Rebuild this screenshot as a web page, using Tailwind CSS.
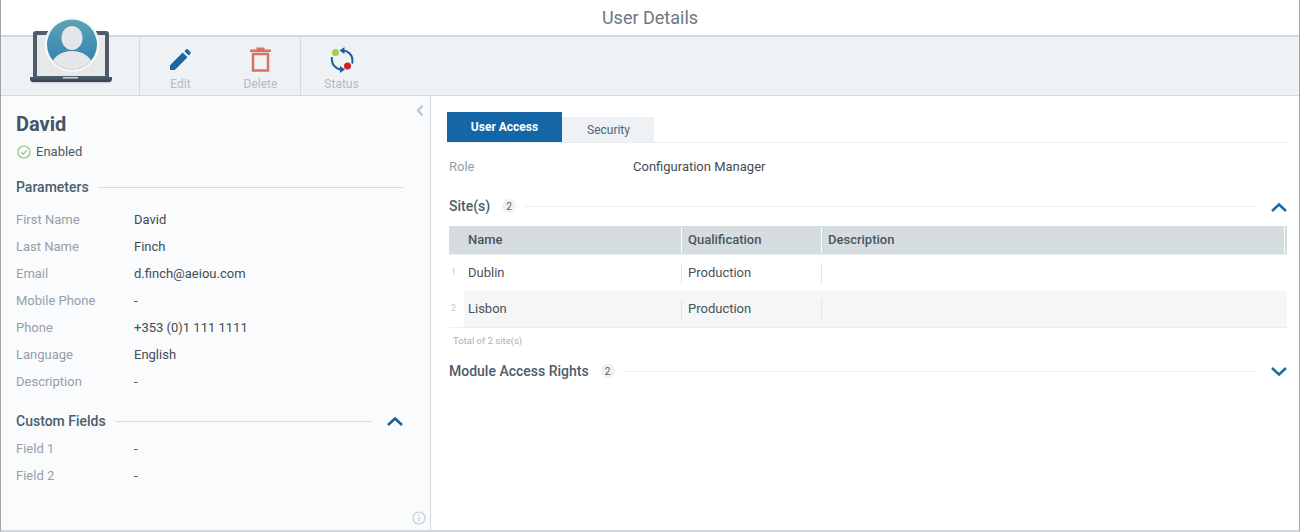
<!DOCTYPE html>
<html lang="en">
<head>
    <meta charset="UTF-8">
    <title>User Details</title>
    <script src="https://cdn.jsdelivr.net/npm/@tailwindcss/browser@4"></script>
</head>
<body class="bg-white font-['Roboto',sans-serif] overflow-hidden">
    <div class="relative w-[1300px] h-[532px] flex flex-col border-x border-x-[#a3a3a3] border-b-2 border-b-[#d3d7da]">
        <!-- Title -->
        <div class="h-[37px] shrink-0 flex items-center justify-center text-[18px] text-[#6b7884] border-b-2 border-[#d5d8db]">User Details</div>

        <!-- Toolbar -->
        <div class="h-[59px] shrink-0 flex bg-[#eff2f5] border-b border-[#d5dadf]">
            <div class="relative w-[139px] border-r border-[#d5dadf]">
                <svg class="absolute left-[28px] top-[-21px]" width="86" height="70" viewBox="0 0 86 70">
                    <defs>
                        <linearGradient id="face" x1="0" y1="0" x2="0" y2="1">
                            <stop offset="0" stop-color="#5da3b4"/>
                            <stop offset="1" stop-color="#2a7fb0"/>
                        </linearGradient>
                        <linearGradient id="base" x1="0" y1="0" x2="0" y2="1">
                            <stop offset="0" stop-color="#4f5d6b"/>
                            <stop offset="1" stop-color="#36414d"/>
                        </linearGradient>
                        <clipPath id="round"><circle cx="43" cy="28.500" r="25"/></clipPath>
                    </defs>
                    <path d="M4 18q0-3 3-3h70q3 0 3 3v44h-76z" fill="#4f5d6b"/>
                    <rect x="8" y="19" width="68" height="41" fill="#e6e8e9"/>
                    <path d="M1 61h82v2q0 3-3 3h-76q-3 0-3-3z" fill="url(#base)"/>
                    <rect x="34" y="61" width="15" height="1.500" fill="#cfd4d8"/>
                    <rect x="3" y="66" width="78" height="1.500" fill="#d4d8dc"/>
                    <circle cx="43" cy="28.500" r="27.500" fill="#f4f7f8"/>
                    <circle cx="43" cy="28.500" r="25" fill="url(#face)"/>
                    <g clip-path="url(#round)" fill="#e4e6e7">
                        <ellipse cx="43" cy="22" rx="10.500" ry="12"/>
                        <ellipse cx="43" cy="51" rx="21" ry="16"/>
                    </g>
                </svg>
            </div>
            <div class="w-[161px] flex border-r border-[#d5dadf]">
                <div class="w-[81px] flex flex-col items-center pt-[12px] text-[12px] text-[#b0bbc4]">
                    <svg width="21" height="21" viewBox="0 0 24 24" fill="#1a66a5">
                        <path d="M0 24v-5.500L14.500 4l5.500 5.500L5.500 24z"/>
                        <path d="M16.500 2.500l2.200-2.200q.8-.7 1.500 0l3.300 3.300q.7.700 0 1.500L21.500 7.500z"/>
                    </svg>
                    <span class="mt-[7px] leading-[14px]">Edit</span>
                </div>
                <div class="w-[79px] flex flex-col items-center pt-[10px] text-[12px] text-[#b0bbc4]">
                    <svg width="21" height="25" viewBox="0 0 21 25" fill="none">
                        <path d="M0 2.500h6.500V0.500h8v2H21V5H0z" fill="#d4735f"/>
                        <rect x="3" y="7" width="15" height="16.500" stroke="#d4735f" stroke-width="2.500"/>
                    </svg>
                    <span class="mt-[5px] leading-[14px]">Delete</span>
                </div>
            </div>
            <div class="w-[81px] flex flex-col items-center pt-[10px] text-[12px] text-[#b0bbc4]">
                <svg width="26" height="26" viewBox="0 0 26 26" fill="none">
                    <path d="M13 3.500A10 10 0 0 1 23.500 13.500Q23.500 15.500 23 16.500" stroke="#1c5f96" stroke-width="2"/>
                    <path d="M15.500 0l-5 3.500 5 3.500z" fill="#1c5f96"/>
                    <path d="M3 10Q2.500 12 3 14A10 10 0 0 0 12 22.500" stroke="#1c5f96" stroke-width="2"/>
                    <path d="M11 19l5 3.500-5 3.500z" fill="#1c5f96"/>
                    <circle cx="6.500" cy="5.500" r="3.500" fill="#a5cf4f"/>
                    <circle cx="18.500" cy="19" r="3.500" fill="#cf2027"/>
                </svg>
                <span class="mt-[4px] leading-[14px]">Status</span>
            </div>
        </div>

        <div class="flex-1 flex min-h-0">
            <!-- Left panel -->
            <aside class="relative w-[430px] shrink-0 bg-[#f9fbfd] border-r border-[#d3d7da] pl-[15px] pr-[27px] pt-[15px]">
                <svg class="absolute right-[6px] top-[8px]" width="8" height="13" viewBox="0 0 8 13" fill="none">
                    <path d="M6.500 1.500L2 6.500l4.500 5" stroke="#b7c6d3" stroke-width="2"/>
                </svg>
                <h1 class="text-[20px] leading-[26px] font-bold text-[#455566]">David</h1>
                <div class="mt-[8px] flex items-center text-[13px] leading-[14px] text-[#4c5963]">
                    <svg width="14" height="14" viewBox="0 0 14 14" fill="none" class="mr-[5px] ml-[1px]">
                        <circle cx="7" cy="7" r="6" stroke="#8cc37a" stroke-width="1.200"/>
                        <path d="M4.200 7.200l2 2 3.600-4" stroke="#8cc37a" stroke-width="1.200"/>
                    </svg>
                    Enabled
                </div>
                <div class="mt-[18px] flex items-center h-[20px]">
                    <span class="text-[14px] font-medium text-[#4d5d6c]">Parameters</span>
                    <span class="flex-1 ml-[9px] border-t border-[#d8dde2]"></span>
                </div>
                <dl class="mt-[9px] text-[13px] leading-[27px]">
                    <div class="flex"><dt class="w-[118px] text-[#95a0a8]">First Name</dt><dd class="text-[#444c54]">David</dd></div>
                    <div class="flex"><dt class="w-[118px] text-[#95a0a8]">Last Name</dt><dd class="text-[#444c54]">Finch</dd></div>
                    <div class="flex"><dt class="w-[118px] text-[#95a0a8]">Email</dt><dd class="text-[#444c54]">d.finch@aeiou.com</dd></div>
                    <div class="flex"><dt class="w-[118px] text-[#95a0a8]">Mobile Phone</dt><dd class="text-[#444c54]">-</dd></div>
                    <div class="flex"><dt class="w-[118px] text-[#95a0a8]">Phone</dt><dd class="text-[#444c54]">+353 (0)1 111 1111</dd></div>
                    <div class="flex"><dt class="w-[118px] text-[#95a0a8]">Language</dt><dd class="text-[#444c54]">English</dd></div>
                    <div class="flex"><dt class="w-[118px] text-[#95a0a8]">Description</dt><dd class="text-[#444c54]">-</dd></div>
                </dl>
                <div class="mt-[16px] flex items-center h-[20px]">
                    <span class="text-[14px] font-medium text-[#4d5d6c]">Custom Fields</span>
                    <span class="flex-1 ml-[9px] border-t border-[#d8dde2]"></span>
                    <svg class="ml-[15px]" width="16" height="10" viewBox="0 0 16 10" fill="none">
                        <path d="M1 9l7-6.500L15 9" stroke="#1e5f91" stroke-width="2.500"/>
                    </svg>
                </div>
                <dl class="mt-[4px] text-[13px] leading-[27px]">
                    <div class="flex"><dt class="w-[118px] text-[#95a0a8]">Field 1</dt><dd class="text-[#444c54]">-</dd></div>
                    <div class="flex"><dt class="w-[118px] text-[#95a0a8]">Field 2</dt><dd class="text-[#444c54]">-</dd></div>
                </dl>
                <svg class="absolute right-[4px] bottom-[5px]" width="14" height="14" viewBox="0 0 14 14" fill="none">
                    <circle cx="7" cy="7" r="6" stroke="#c3ced6" stroke-width="1.200"/>
                    <path d="M7 6v4.500M7 3.500v1.200" stroke="#c3ced6" stroke-width="1.200"/>
                </svg>
            </aside>

            <!-- Right panel -->
            <main class="flex-1 min-w-0 pl-[16px] pr-[12px] pt-[16px]">
                <div class="flex items-end h-[31px] border-b border-[#eceff1]">
                    <div class="w-[115px] h-[30px] flex items-center justify-center bg-[#1466a6] text-white text-[12px] font-bold">User Access</div>
                    <div class="w-[92px] h-[25px] pl-[1px] flex items-center justify-center bg-[#eff2f5] text-[#4f6275] text-[12px]">Security</div>
                </div>
                <div class="mt-[15px] pl-[2px] flex text-[13px] leading-[18px]">
                    <span class="w-[184px] text-[#95a0a8]">Role</span>
                    <span class="text-[#444c54]">Configuration Manager</span>
                </div>
                <div class="mt-[20px] pl-[2px] flex items-center h-[20px]">
                    <span class="text-[14px] font-medium text-[#4d5d6c]">Site(s)</span>
                    <span class="ml-[12px] w-[14px] h-[14px] rounded-full bg-[#eff2f5] flex items-center justify-center text-[10px] text-[#4d5d6c]">2</span>
                    <span class="flex-1 ml-[8px] border-t border-[#eceff1]"></span>
                    <svg class="ml-[15px] mt-[2px]" width="16" height="10" viewBox="0 0 16 10" fill="none">
                        <path d="M1 9l7-6.500L15 9" stroke="#1e6aa3" stroke-width="2.500"/>
                    </svg>
                </div>
                <!-- Table -->
                <div class="mt-[10px] ml-[2px] text-[13px]">
                    <div class="h-[29px] flex items-center bg-[#d6dde1] border-b border-[#eceff1] font-medium text-[#4c5660]">
                        <span class="w-[233px] pl-[19px] h-[26px] flex items-center border-r border-white">Name</span>
                        <span class="w-[140px] pl-[6px] h-[26px] flex items-center border-r border-white">Qualification</span>
                        <span class="w-[463px] pl-[6px] h-[26px] flex items-center border-r border-white">Description</span>
                    </div>
                    <div class="h-[36px] flex items-center text-[#4a5157]">
                        <span class="w-[15px] pl-[2px] text-[9px] text-[#c6ccd0]">1</span>
                        <span class="w-[218px] pl-[4px] h-[21px] flex items-center border-r border-[#e3e6e8]">Dublin</span>
                        <span class="w-[140px] pl-[6px] h-[21px] flex items-center border-r border-[#e3e6e8]">Production</span>
                    </div>
                    <div class="h-[37px] flex items-center text-[#4a5157] border-b border-[#eceff1]">
                        <span class="w-[15px] pl-[2px] text-[9px] text-[#c6ccd0]">2</span>
                        <div class="flex-1 h-full flex items-center bg-[#f4f6f8]">
                            <span class="w-[218px] pl-[4px] h-[21px] flex items-center border-r border-[#e3e6e8]">Lisbon</span>
                            <span class="w-[140px] pl-[6px] h-[21px] flex items-center border-r border-[#e3e6e8]">Production</span>
                        </div>
                    </div>
                </div>
                <div class="mt-[7px] pl-[6px] text-[9.500px] leading-[12px] text-[#a9b1b7]">Total of 2 site(s)</div>
                <div class="mt-[14px] pl-[2px] flex items-center h-[20px]">
                    <span class="text-[14px] font-medium text-[#4d5d6c]">Module Access Rights</span>
                    <span class="ml-[12px] w-[14px] h-[14px] rounded-full bg-[#eff2f5] flex items-center justify-center text-[10px] text-[#4d5d6c]">2</span>
                    <span class="flex-1 ml-[8px] border-t border-[#eceff1]"></span>
                    <svg class="ml-[15px] mt-[1px]" width="16" height="10" viewBox="0 0 16 10" fill="none">
                        <path d="M1 1l7 6.500L15 1" stroke="#1e6aa3" stroke-width="2.500"/>
                    </svg>
                </div>
            </main>
        </div>
    </div>
</body>
</html>
